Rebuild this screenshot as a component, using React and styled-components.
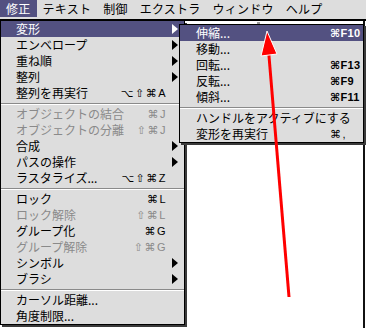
import React from 'react';
import styled, { createGlobalStyle } from 'styled-components';

const Global = createGlobalStyle`
  html, body { margin: 0; padding: 0; background: #fff; }
  body {
    width: 366px; height: 328px; overflow: hidden;
    font-family: "Noto Sans CJK JP", "Noto Sans", sans-serif;
  }
  * { box-sizing: border-box; }
`;

const HL = '#535181';

const Screen = styled.div`
  position: relative;
  width: 366px;
  height: 328px;
  background: #fff;
  overflow: hidden;
`;

const MenuBar = styled.div`
  display: flex;
  height: 21px;
  background: #dddddd;
  border-bottom: 2px solid #000;
  font-size: 12px;
  letter-spacing: 0.25px;
`;

const BarItem = styled.div`
  height: 17px;
  line-height: 17px;
  padding: 0 6px;
  color: ${p => (p.$active ? '#fff' : '#000')};
  background: ${p => (p.$active ? HL : 'transparent')};
  white-space: nowrap;
`;

const WindowEdge = styled.div`
  position: absolute;
  left: 363px;
  top: 21px;
  bottom: 0;
  width: 2px;
  background: #111;
`;

const Tick = styled.div`
  position: absolute;
  left: 257px;
  top: 22px;
  width: 3px;
  height: 2px;
  background: #999;
`;

const Menu = styled.div`
  position: absolute;
  left: ${p => p.$left}px;
  top: ${p => p.$top}px;
  width: ${p => p.$width}px;
  background: #dddddd;
  border: 1px solid #000;
  border-top: ${p => (p.$noTop ? 'none' : '1px solid #000')};
  box-shadow: 2px 2px 0 #3a3a3a;
  display: flex;
  flex-direction: column;
`;

const Row = styled.div`
  display: flex;
  align-items: center;
  height: 16px;
  padding: 0 ${p => p.$padRight}px 0 ${p => p.$padLeft}px;
  font-size: 12px;
  line-height: 16px;
  color: ${p => (p.$active ? '#fff' : p.$disabled ? '#8a8a8a' : '#000')};
  background: ${p => (p.$active ? HL : 'transparent')};
  white-space: nowrap;
`;

const Label = styled.span`
  flex: 1;
`;

const Shortcut = styled.span`
  font-family: "Liberation Sans", "DejaVu Sans", sans-serif;
  font-size: 11px;
  font-weight: ${p => (p.$bold ? 'bold' : 'normal')};
  letter-spacing: ${p => (p.$bold ? '0.3px' : '1.5px')};
  text-align: ${p => (p.$fixed ? 'left' : 'right')};
  width: ${p => (p.$fixed ? `${p.$fixed}px` : 'auto')};
  flex: none;
  overflow: visible;
`;

const ArrowCell = styled.span`
  width: 6px;
  height: 10px;
  margin-left: 5px;
  flex: none;
  border-left: ${p => (p.$show ? '6px solid' : 'none')};
  border-top: ${p => (p.$show ? '5px solid transparent' : 'none')};
  border-bottom: ${p => (p.$show ? '5px solid transparent' : 'none')};
  border-left-color: ${p => (p.$active ? '#fff' : '#000')};
`;

const Separator = styled.div`
  height: 5px;
  display: flex;
  align-items: center;
  &::before {
    content: '';
    flex: 1;
    border-top: 1px solid #8a8a8a;
    border-bottom: 1px solid #fff;
  }
`;

const Overlay = styled.svg`
  position: absolute;
  left: 0;
  top: 0;
  pointer-events: none;
`;

const mainItems = [
  { label: '変形', sub: true, active: true },
  { label: 'エンベロープ', sub: true },
  { label: '重ね順', sub: true },
  { label: '整列', sub: true },
  { label: '整列を再実行', sc: '⌥⇧⌘A' },
  'sep',
  { label: 'オブジェクトの結合', sc: '⌘J', disabled: true },
  { label: 'オブジェクトの分離', sc: '⇧⌘J', disabled: true },
  { label: '合成', sub: true },
  { label: 'パスの操作', sub: true },
  { label: 'ラスタライズ...', sc: '⌥⇧⌘Z' },
  'sep',
  { label: 'ロック', sc: '⌘L' },
  { label: 'ロック解除', sc: '⇧⌘L', disabled: true },
  { label: 'グループ化', sc: '⌘G' },
  { label: 'グループ解除', sc: '⇧⌘G', disabled: true },
  { label: 'シンボル', sub: true },
  { label: 'ブラシ', sub: true },
  'sep',
  { label: 'カーソル距離...' },
  { label: '角度制限...' },
];

const subItems = [
  { label: '伸縮...', sc: '⌘F10', bold: true, active: true },
  { label: '移動...' },
  { label: '回転...', sc: '⌘F13', bold: true },
  { label: '反転...', sc: '⌘F9', bold: true },
  { label: '傾斜...', sc: '⌘F11', bold: true },
  'sep',
  { label: 'ハンドルをアクティブにする' },
  { label: '変形を再実行', sc: '⌘,' },
];

const barItems = ['修正', 'テキスト', '制御', 'エクストラ', 'ウィンドウ', 'ヘルプ'];

export default function App() {
  return (
    <Screen>
      <Global />
      <MenuBar>
        {barItems.map((t, i) => (
          <BarItem key={t} $active={i === 0}>{t}</BarItem>
        ))}
      </MenuBar>
      <WindowEdge />
      <Tick />
      <Menu $left={0} $top={21} $width={185} $noTop>
        {mainItems.map((it, i) =>
          it === 'sep' ? (
            <Separator key={i} />
          ) : (
            <Row key={i} $padLeft={15} $padRight={6} $active={it.active} $disabled={it.disabled}>
              <Label>{it.label}</Label>
              {it.sc && <Shortcut>{it.sc}</Shortcut>}
              <ArrowCell $show={it.sub} $active={it.active} />
            </Row>
          )
        )}
      </Menu>
      <Menu $left={179} $top={24} $width={185}>
        {subItems.map((it, i) =>
          it === 'sep' ? (
            <Separator key={i} />
          ) : (
            <Row key={i} $padLeft={16} $padRight={1} $active={it.active}>
              <Label>{it.label}</Label>
              <Shortcut $fixed={32} $bold={it.bold}>{it.sc || ''}</Shortcut>
            </Row>
          )
        )}
      </Menu>
      <Overlay width="366" height="328" viewBox="0 0 366 328">
        <line x1="268.5" y1="50" x2="289" y2="297" stroke="#ff0000" strokeWidth="3" />
        <polygon points="267,31 261,56 277,54" fill="#ff0000" stroke="#fff" strokeWidth="1" strokeLinejoin="miter" />
      </Overlay>
    </Screen>
  );
}
